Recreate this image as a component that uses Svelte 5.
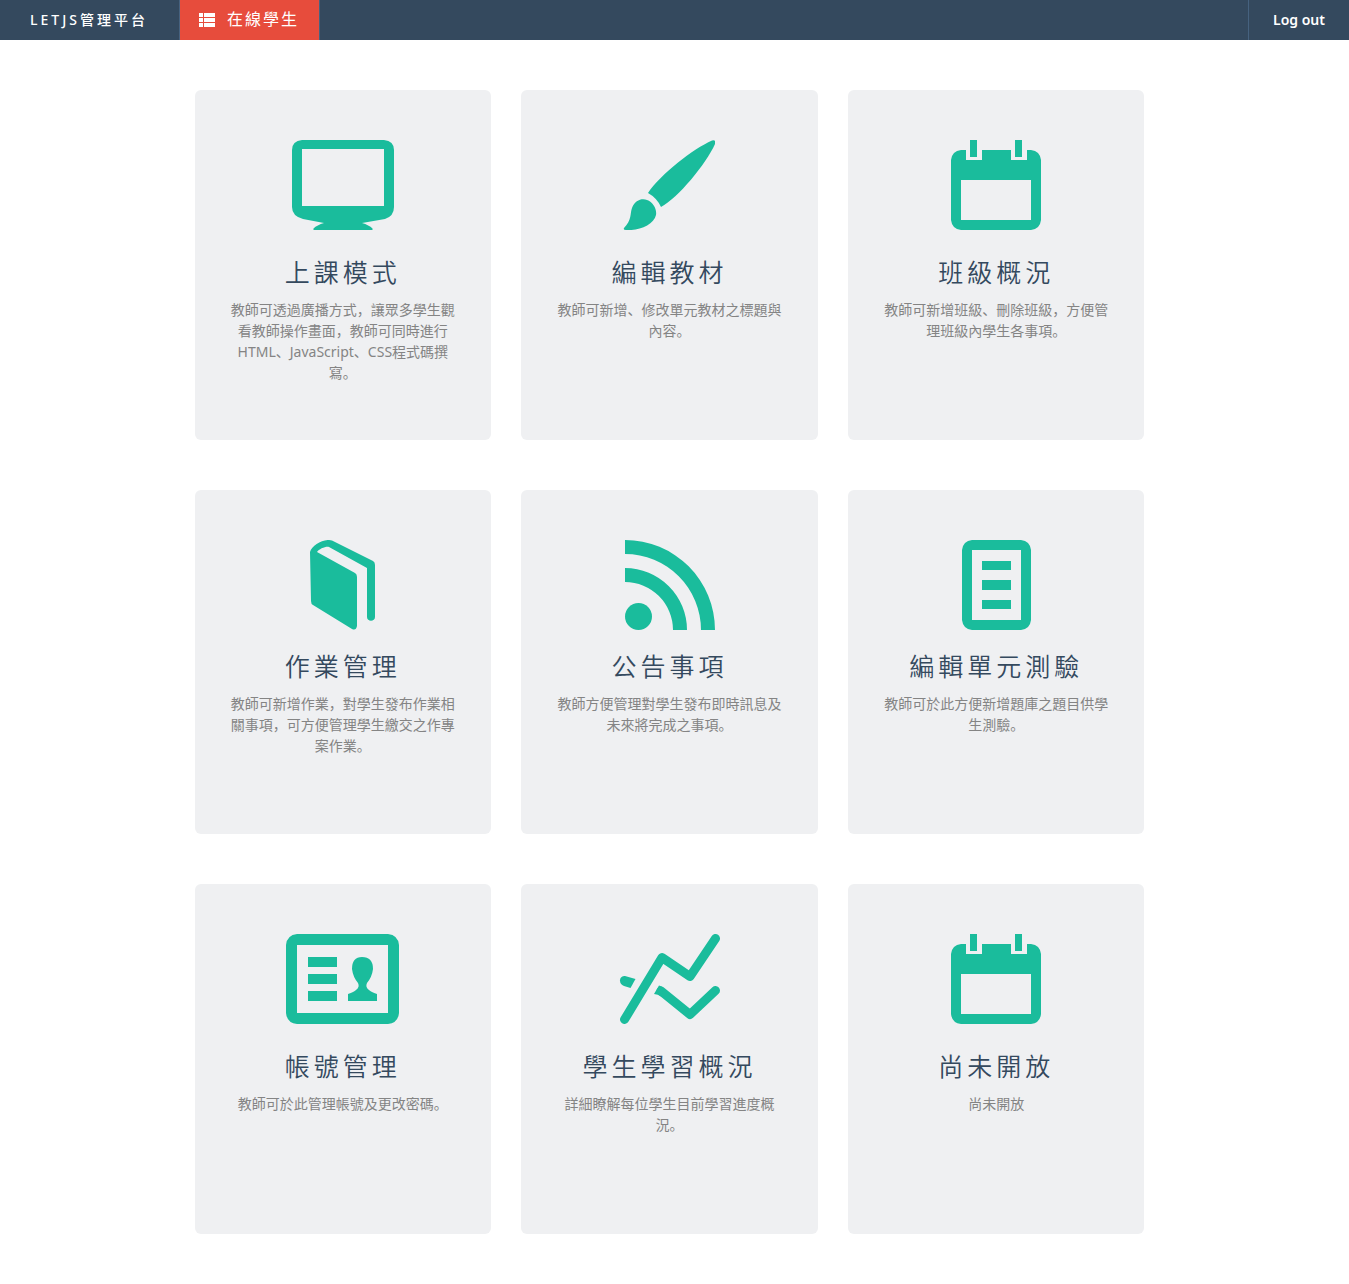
<script>
  const rows = [
    {
      compact: false,
      tiles: [
        { icon: 'monitor', title: '上課模式', text: '教師可透過廣播方式，讓眾多學生觀看教師操作畫面，教師可同時進行HTML、JavaScript、CSS程式碼撰寫。' },
        { icon: 'brush', title: '編輯教材', text: '教師可新增、修改單元教材之標題與內容。' },
        { icon: 'calendar', title: '班級概況', text: '教師可新增班級、刪除班級，方便管理班級內學生各事項。' }
      ]
    },
    {
      compact: true,
      tiles: [
        { icon: 'book', title: '作業管理', text: '教師可新增作業，對學生發布作業相關事項，可方便管理學生繳交之作專案作業。' },
        { icon: 'feed', title: '公告事項', text: '教師方便管理對學生發布即時訊息及未來將完成之事項。' },
        { icon: 'sheet', title: '編輯單元測驗', text: '教師可於此方便新增題庫之題目供學生測驗。' }
      ]
    },
    {
      compact: false,
      tiles: [
        { icon: 'idcard', title: '帳號管理', text: '教師可於此管理帳號及更改密碼。' },
        { icon: 'chart', title: '學生學習概況', text: '詳細瞭解每位學生目前學習進度概況。' },
        { icon: 'calendar', title: '尚未開放', text: '尚未開放' }
      ]
    }
  ];
</script>

{#snippet glyph(name)}
  {#if name === 'monitor'}
    <svg width="102" height="90" viewBox="0 0 102 90" aria-hidden="true">
      <path fill-rule="evenodd" d="M10 0H92Q102 1 102 10V67Q102 76 93 79L70 83Q77 85 80.500 88.500Q81 90 80 90H22Q21 90 21.500 88.500Q25 85 32 83L11 79Q0 76 0 67V10Q0 1 10 0ZM10 9V66H92V9Z" />
    </svg>
  {:else if name === 'brush'}
    <svg width="92" height="90" viewBox="0 0 92 90" aria-hidden="true">
      <path d="M25 53C38 34 70 9 89 0.600Q93-1 92 4C83 24 55 58 38 67Q34 58 25 53Z" />
      <path d="M1 88C9 80 7 73 9 68C12 60 19 58 24 60C30 62 34 69 33 75C31 85 15 91 3 90Q0 90 1 88Z" />
    </svg>
  {:else if name === 'calendar'}
    <svg width="90" height="90" viewBox="0 0 90 90" aria-hidden="true">
      <path d="M19 0H26V17H19ZM64 0H71V17H64Z" />
      <path fill-rule="evenodd" d="M10 10H15V20H31V10H60V20H76V10H80Q89 11 90 20V80Q89 89 80 90H10Q1 89 0 80V20Q1 11 10 10ZM10 40V80H80V40Z" />
    </svg>
  {:else if name === 'book'}
    <svg width="66" height="90" viewBox="0 0 66 90" aria-hidden="true">
      <path d="M0 12C2 5 14-2 22 0.500L63 21Q65 22 65 25V77C65 82 57 82 57 77V28L19 7C16 6 9 9 7 12L45 33Q47 34 47 37V86Q46 91 42 89L3 65Q1 64 1 61Z" />
    </svg>
  {:else if name === 'feed'}
    <svg width="91" height="90" viewBox="-1 0 91 90" aria-hidden="true">
      <circle cx="13.500" cy="76.500" r="13.500" />
      <path d="M0 28A62 62 0 0 1 62 90H48A48 48 0 0 0 0 42ZM0 0A90 90 0 0 1 90 90H76A76 76 0 0 0 0 14Z" />
    </svg>
  {:else if name === 'sheet'}
    <svg width="69" height="90" viewBox="0 0 69 90" aria-hidden="true">
      <path fill-rule="evenodd" d="M10 0H59Q68 1 69 10V80Q68 89 59 90H10Q1 89 0 80V10Q1 1 10 0ZM10 10V80H59V10Z" />
      <path d="M20 21H49V30H20ZM20 40H49V50H20ZM20 60H49V69H20Z" />
    </svg>
  {:else if name === 'idcard'}
    <svg width="113" height="90" viewBox="0 0 113 90" aria-hidden="true">
      <path fill-rule="evenodd" d="M11 0H102Q112 1 113 11V79Q112 89 102 90H11Q1 89 0 79V11Q1 1 11 0ZM11 11V79H102V11Z" />
      <path d="M22 23H51V33H22ZM22 40H51V50H22ZM22 57H51V67H22Z" />
      <path d="M66 35Q66 23 76 23Q87 23 87 35Q86 43 81 49Q79 53 83 56Q85 58 91 60V67H62V60Q68 58 70 56Q74 53 72 49Q67 43 66 35Z" />
    </svg>
  {:else if name === 'chart'}
    <svg width="101" height="90" viewBox="-1 0 101 90" aria-hidden="true">
      <path class="stroke" d="M4.500 85.500L42 23.500L70 42.500L95.500 4.500M41 57L70 80.500L95.500 56.500" />
      <path d="M39 51.500Q42 52 44 54.500L41 62.500Q38 60 34 60Z" />
      <path d="M5 42L15.500 45L10.500 54L4 52C-2 50-1 41 5 42Z" />
    </svg>
  {/if}
{/snippet}

<header>
  <nav>
    <a class="brand" href="#home">LETJS管理平台</a>
    <a class="online" href="#online">
      <svg width="16" height="14" viewBox="0 0 16 14" aria-hidden="true">
        <path d="M0 0H4V4H0ZM5 0H16V4H5ZM0 5H4V9H0ZM5 5H16V9H5ZM0 10H4V14H0ZM5 10H16V14H5Z" />
      </svg>
      <span>在線學生</span>
    </a>
    <a class="logout" href="#logout">Log out</a>
  </nav>
</header>

<main>
  {#each rows as row}
    <section class:compact={row.compact}>
      {#each row.tiles as tile}
        <a class="tile" href="#{tile.icon}">
          <span class="icon">{@render glyph(tile.icon)}</span>
          <h3>{tile.title}</h3>
          <p>{tile.text}</p>
        </a>
      {/each}
    </section>
  {/each}
</main>

<style>
  :global(body) {
    margin: 0;
    background: #fff;
    font-family: 'Noto Sans', 'Noto Sans CJK SC', sans-serif;
    font-size: 14px;
    line-height: 21px;
  }
  a {
    color: inherit;
    text-decoration: none;
  }
  svg {
    display: block;
    fill: currentColor;
  }
  nav {
    display: flex;
    height: 40px;
    background: #34495e;
    color: #fff;
  }
  nav a {
    display: flex;
    align-items: center;
    box-sizing: border-box;
  }
  .brand {
    padding: 0 31px 2px 30px;
    border-right: 1px solid #46627f;
    font-weight: 500;
    letter-spacing: 3px;
  }
  .online {
    gap: 12px;
    padding: 0 20px 1px 19px;
    border-right: 1px solid #46627f;
    background: #e74c3c;
    font-size: 16px;
    letter-spacing: 2px;
  }
  .logout {
    margin-left: auto;
    padding: 0 24px 2px;
    border-left: 1px solid #46627f;
    font-weight: 600;
  }
  main {
    display: grid;
    gap: 50px;
    max-width: 950px;
    margin: 0 auto;
    padding: 50px 25px 50px 15px;
  }
  section {
    display: grid;
    grid-template-columns: repeat(3, 1fr);
    gap: 30px;
  }
  .tile {
    padding: 50px 30px 57px;
    border-radius: 6px;
    background: #eff0f2;
    color: #848484;
    text-align: center;
  }
  .icon {
    display: flex;
    justify-content: center;
    margin-bottom: 27px;
    color: #1abc9c;
  }
  .compact .icon {
    margin-bottom: 21px;
  }
  h3 {
    margin: 0 0 12px;
    color: #34495e;
    font-size: 25px;
    font-weight: 350;
    line-height: 30px;
    letter-spacing: 4px;
  }
  p {
    min-height: 84px;
    margin: 0;
  }
  .stroke {
    fill: none;
    stroke: currentColor;
    stroke-width: 9;
    stroke-linecap: round;
    stroke-linejoin: round;
  }
</style>
